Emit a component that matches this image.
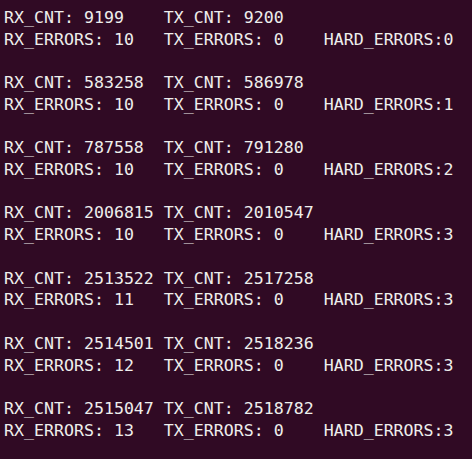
import React from 'react';

const rows = [
  ['9199', '9200', '10', '0'],
  ['583258', '586978', '10', '1'],
  ['787558', '791280', '10', '2'],
  ['2006815', '2010547', '10', '3'],
  ['2513522', '2517258', '11', '3'],
  ['2514501', '2518236', '12', '3'],
  ['2515047', '2518782', '13', '3'],
];

const pad = (s, n) => s + ' '.repeat(Math.max(1, n - s.length));

const App = () => {
  const lines = [];
  rows.forEach(([rx, tx, err, hard], i) => {
    if (i > 0) lines.push('');
    lines.push(pad('RX_CNT: ' + rx, 16) + 'TX_CNT: ' + tx);
    lines.push(pad('RX_ERRORS: ' + err, 16) + pad('TX_ERRORS: 0', 16) + 'HARD_ERRORS:' + hard);
  });

  return (
    <div className="w-[472px] h-[459px] overflow-hidden bg-[#300a24] pt-[7px] pl-[4px]">
      <pre className="font-['DejaVu_Sans_Mono',monospace] text-[16.6px] leading-[21.72px] text-[#eeeeec] whitespace-pre">
        {lines.join('\n')}
      </pre>
    </div>
  );
};

export default App;
